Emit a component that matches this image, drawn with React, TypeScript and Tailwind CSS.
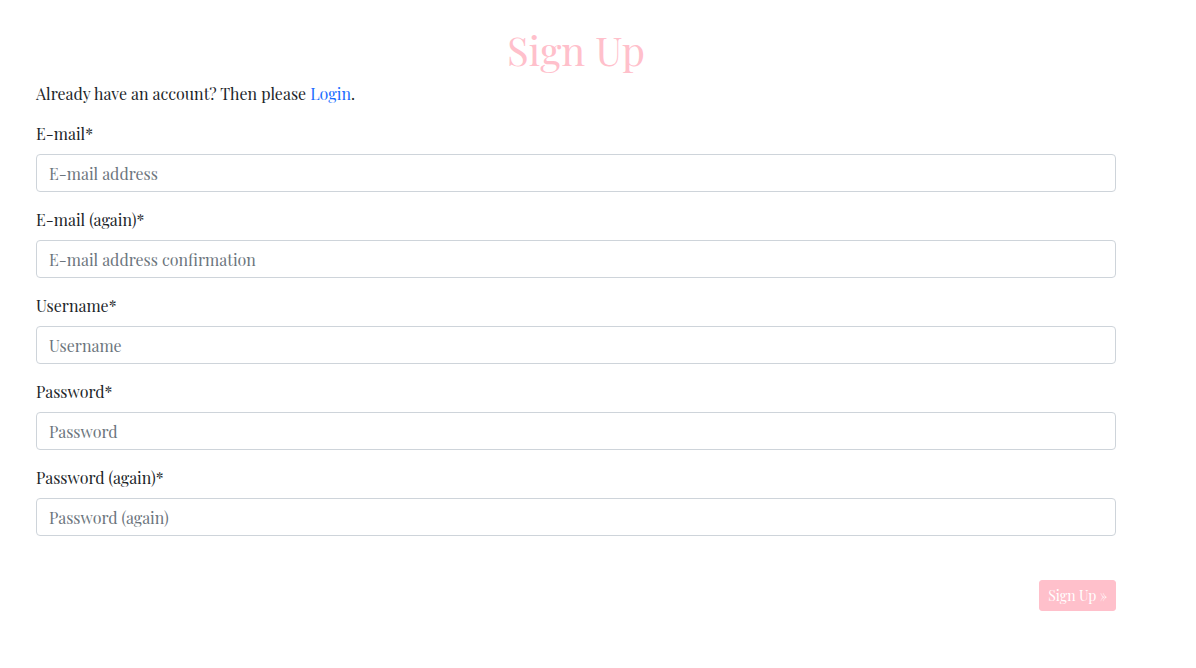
import React from "react";

type Field = { id: string; label: string; placeholder: string; type: string };

const fields: Field[] = [
  { id: "email", label: "E-mail", placeholder: "E-mail address", type: "email" },
  { id: "email2", label: "E-mail (again)", placeholder: "E-mail address confirmation", type: "email" },
  { id: "username", label: "Username", placeholder: "Username", type: "text" },
  { id: "password1", label: "Password", placeholder: "Password", type: "password" },
  { id: "password2", label: "Password (again)", placeholder: "Password (again)", type: "password" },
];

export default function App() {
  return (
    <main className="min-h-screen bg-white pt-[26px] pr-20 pb-14 pl-9 font-['Playfair_Display','Liberation_Serif',serif] text-base leading-6 text-[#212529]">
      <h1 className="mb-2 text-center text-[40px] leading-12 text-[#ffc0cb]">Sign Up</h1>
      <p className="mb-4">
        Already have an account? Then please{" "}
        <a href="#login" className="text-[#1a6dff]">Login</a>.
      </p>
      <form onSubmit={(e) => e.preventDefault()}>
        {fields.map((f) => (
          <div key={f.id} className="mb-4">
            <label htmlFor={f.id} className="mb-2 block w-fit">
              {f.label}<span>*</span>
            </label>
            <input
              id={f.id}
              name={f.id}
              type={f.type}
              placeholder={f.placeholder}
              required
              className="block h-[38px] w-full rounded border border-[#ced4da] bg-white px-3 py-1.5 placeholder:text-[#6c757d] focus:border-[#80bdff] focus:outline-none"
            />
          </div>
        ))}
        <div className="mt-11 flex justify-end">
          <button type="submit" className="h-[31px] rounded-[3px] border border-[#ffc0cb] bg-[#ffc0cb] px-2 text-sm text-white">
            Sign Up »
          </button>
        </div>
      </form>
    </main>
  );
}
